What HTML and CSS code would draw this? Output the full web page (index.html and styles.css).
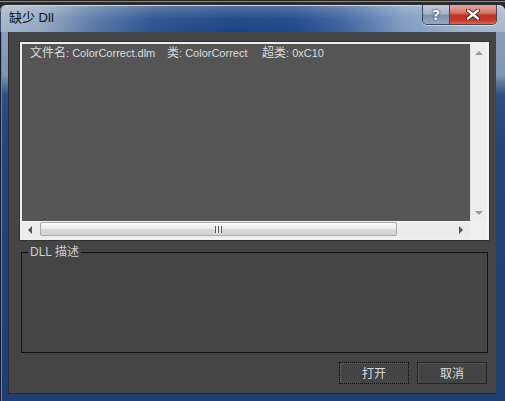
FILE: index.html
```html
<!DOCTYPE html>
<html>
<head>
<meta charset="utf-8">
<link rel="stylesheet" href="styles.css">
</head>
<body>
<div class="desk"></div>
<div class="window">
  <div class="titlebar">
    <span class="title">缺少 Dll</span>
    <div class="caption-btns">
      <div class="cbtn help">?</div>
      <div class="cbtn close">
        <svg width="14" height="11" viewBox="0 0 14 11"><path d="M2 1.5 L12 9.5 M12 1.5 L2 9.5" stroke="#3b1510" stroke-width="4" stroke-linecap="round"/><path d="M2 1.5 L12 9.5 M12 1.5 L2 9.5" stroke="#fff" stroke-width="2.4" stroke-linecap="round"/></svg>
      </div>
    </div>
  </div>
  <div class="client">
    <div class="listbox">
      <div class="list-content">
        <div class="row"><span class="c1"><span class="cjk">文件名</span>: ColorCorrect.dlm</span><span class="c2"><span class="cjk">类</span>: ColorCorrect</span><span class="c3"><span class="cjk">超类</span>: 0xC10</span></div>
      </div>
      <div class="vscroll">
        <span class="arr up"></span>
        <span class="arr down"></span>
      </div>
      <div class="hscroll">
        <span class="arr left"></span>
        <div class="thumb"><span class="grip"></span></div>
        <span class="arr right"></span>
      </div>
      <div class="corner"></div>
    </div>
    <fieldset class="group">
      <legend>DLL 描述</legend>
    </fieldset>
    <div class="buttons">
      <button class="btn focus">打开</button>
      <button class="btn">取消</button>
    </div>
  </div>
</div>
</body>
</html>
```
FILE: styles.css
```css
html, body {
  margin: 0;
  height: 100%;
  overflow: hidden;
  background: #252525;
  font-family: "Liberation Sans", "Noto Sans CJK SC", sans-serif;
}
.desk {
  height: 5px;
  background:
    linear-gradient(#252525 0, #252525 1px, #8a8a8a 1px, #8a8a8a 2px, #2a2a2a 2px);
}
.window {
  height: 396px;
  box-sizing: border-box;
  display: flex;
  flex-direction: column;
  padding: 0 9px 7px 8px;
  border-radius: 6px 6px 0 0;
  background: linear-gradient(to bottom, #8fa4bf 0, #7d95b6 70px, #2b4f86 90px, #22457c 140px, #1e3f73 100%);
  box-shadow: inset 1px 0 #101c30, inset 0 1px #4a5d78, inset 2px 0 #6d88b0;
}
.titlebar {
  height: 27px;
  margin: 0 -9px 0 -8px;
  padding: 0 8px 0 9px;
  display: flex;
  justify-content: space-between;
  align-items: flex-start;
  border-radius: 6px 6px 0 0;
  background:
    linear-gradient(to bottom, rgba(255,255,255,0.25), rgba(255,255,255,0.05) 50%, rgba(0,0,0,0) 100%),
    linear-gradient(to right, #a3b4c9 0%, #95a9c2 8%, #5b7ba6 18%, #2a5290 30%, #1a4585 45%, #1c4789 58%, #3c63a0 68%, #7f9bc0 80%, #9fb3cc 92%, #a8b9ce 100%);
  box-shadow: inset 0 1px #cfd9e6, inset 1px 0 #3a4c68;
}
.title {
  margin-top: 5px;
  font-size: 13px;
  line-height: 16px;
  color: #111;
}
.caption-btns {
  display: flex;
  height: 19px;
  border: 1px solid #3a4a63;
  border-top: none;
  border-radius: 0 0 5px 5px;
  overflow: hidden;
  box-shadow: 0 1px 0 rgba(255,255,255,0.5);
}
.cbtn {
  height: 100%;
  display: flex;
  align-items: center;
  justify-content: center;
}
.help {
  width: 26px;
  background: linear-gradient(to bottom, #bfcad9 0%, #a4b3c8 45%, #7c91ad 55%, #97a9c0 100%);
  color: #fff;
  font: bold 14px "DejaVu Sans", sans-serif;
  text-shadow: 0 0 2px #1c2a40, 0 0 1px #1c2a40;
  border-right: 1px solid #3a4a63;
}
.close {
  width: 46px;
  background: linear-gradient(to bottom, #e8a59b 0%, #d8766a 40%, #c1321f 55%, #c53a28 80%, #d9624f 100%);
}
.client {
  flex: 1;
  display: flex;
  flex-direction: column;
  background: #454545;
  box-shadow: inset 1px 0 #2a2a2a, inset 0 -1px #2a2a2a;
}
.listbox {
  margin: 10px 7px 0 12px;
  height: 198px;
  box-sizing: border-box;
  border: 2px solid #efefef;
  border-right-color: #f4f4f4;
  box-shadow: 0 0 0 1px #333;
  display: grid;
  grid-template-columns: 1fr 17px;
  grid-template-rows: 1fr 17px;
}
.list-content {
  background: #555;
  padding: 1px 0 0 8px;
}
.row {
  font-size: 11px;
  line-height: 14px;
  color: #dcdcdc;
  white-space: pre;
  display: flex;
  align-items: baseline;
}
.cjk {
  font-family: "Noto Sans CJK SC", sans-serif;
  font-size: 12px;
}
.c1 { width: 137px; }
.c2 { width: 95px; }
.vscroll {
  background: #ededed;
  position: relative;
  box-shadow: inset 1px 0 #e2e2e2;
}
.hscroll {
  background: #ececec;
  position: relative;
  box-shadow: inset 0 1px #f5f5f5;
}
.corner {
  background: #efefef;
}
.arr {
  position: absolute;
  width: 0;
  height: 0;
}
.up {
  left: 5px; top: 7px;
  border-left: 4px solid transparent;
  border-right: 4px solid transparent;
  border-bottom: 4px solid #9a9a9a;
}
.down {
  left: 5px; bottom: 6px;
  border-left: 4px solid transparent;
  border-right: 4px solid transparent;
  border-top: 4px solid #9a9a9a;
}
.left {
  left: 6px; top: 5px;
  border-top: 4px solid transparent;
  border-bottom: 4px solid transparent;
  border-right: 4px solid #555;
}
.right {
  right: 7px; top: 5px;
  border-top: 4px solid transparent;
  border-bottom: 4px solid transparent;
  border-left: 4px solid #555;
}
.thumb {
  position: absolute;
  left: 18px;
  top: 1px;
  width: 357px;
  height: 14px;
  box-sizing: border-box;
  border: 1px solid #a8a8a8;
  border-radius: 2px;
  background: linear-gradient(to bottom, #fbfbfb 0%, #ececec 45%, #d9d9d9 55%, #d2d2d2 100%);
  display: flex;
  align-items: center;
  justify-content: center;
}
.grip {
  width: 7px;
  height: 7px;
  background: repeating-linear-gradient(to right, #555 0, #555 1px, #eee 1px, #eee 3px);
}
.group {
  margin: 6px 8px 0 13px;
  height: 107px;
  box-sizing: border-box;
  padding: 0;
  min-width: 0;
  border: 1px solid #121212;
}
.group legend {
  margin-left: 6px;
  padding: 0 2px;
  font-size: 12px;
  line-height: 12px;
  color: #cfcfcf;
}
.buttons {
  display: flex;
  justify-content: flex-end;
  gap: 8px;
  margin: 9px 9px 0 0;
}
.btn {
  width: 70px;
  height: 22px;
  margin: 0;
  padding: 0;
  background: #444;
  border: 1px solid #262626;
  box-shadow: inset 1px 1px #555;
  color: #dcdcdc;
  font-family: "Noto Sans CJK SC", sans-serif;
  font-size: 12px;
  line-height: 18px;
}
.btn.focus {
  border: 1px dotted #0a0a0a;
}
```
